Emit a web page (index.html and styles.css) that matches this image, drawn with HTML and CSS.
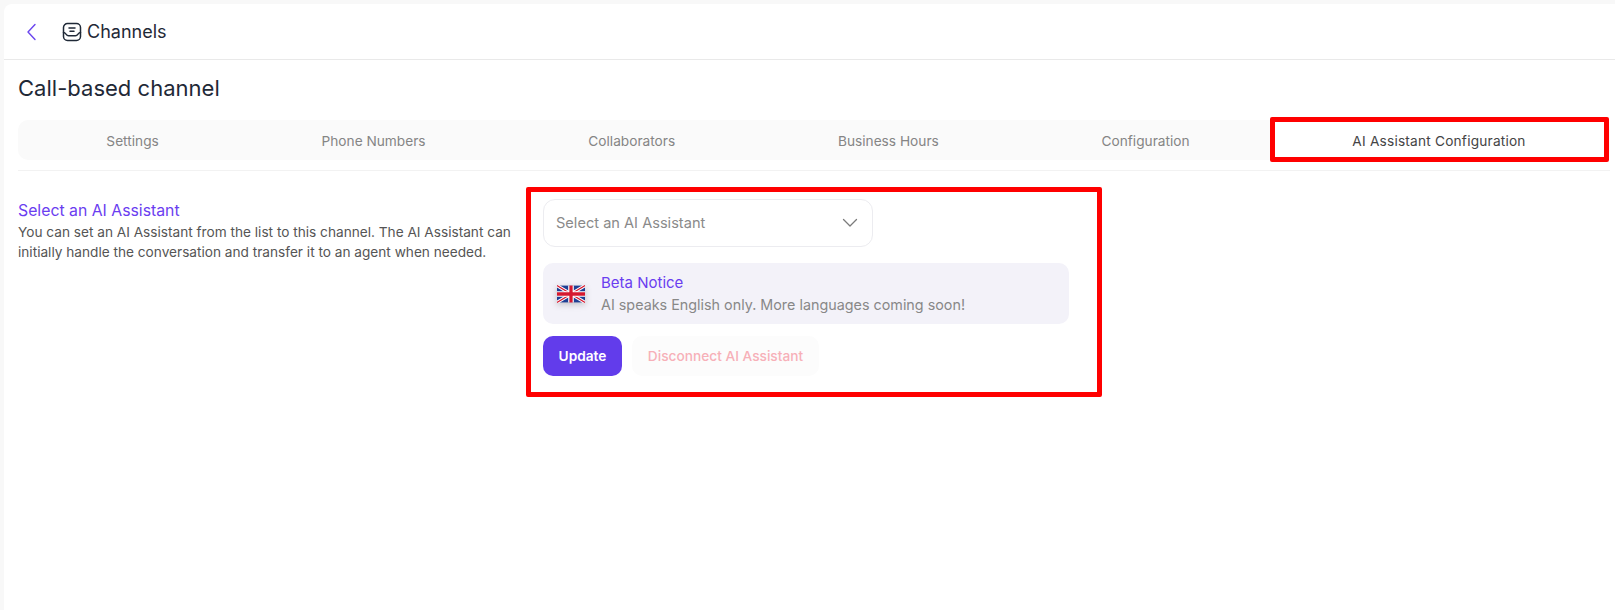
FILE: index.html
```html
<!DOCTYPE html>
<html>

<head>
    <title>Channels</title>
    <link rel="stylesheet" href="styles.css">
</head>

<body>
    <div class="panel">
        <div class="top-bar">
            <svg class="back-icon" width="24" height="24" viewBox="0 0 24 24" fill="none" stroke="#6a45ee" stroke-width="1.4" stroke-linecap="round" stroke-linejoin="round">
                <path d="M15 4.500L8 12l7 7.500"/>
            </svg>
            <svg class="channel-icon" width="20" height="20" viewBox="0 0 20 20" fill="none" stroke="#1f2937" stroke-width="1.5" stroke-linecap="round" stroke-linejoin="round">
                <path d="M5.500 1.500h9a4 4 0 0 1 4 4v9a4 4 0 0 1-4 4h-9a4 4 0 0 1-4-4v-9a4 4 0 0 1 4-4z"/>
                <path d="M1.500 10.500c2.500 0 2.500 3.200 5 3.200h7c2.500 0 2.500-3.200 5-3.200"/>
                <path d="M7 6h6M8 9.200h4"/>
            </svg>
            <span class="top-title">Channels</span>
        </div>

        <div class="content">
            <h1 class="page-title">Call-based channel</h1>

            <div class="tabs">
                <div class="tab">Settings</div>
                <div class="tab">Phone Numbers</div>
                <div class="tab">Collaborators</div>
                <div class="tab">Business Hours</div>
                <div class="tab">Configuration</div>
                <div class="tab tab-active">AI Assistant Configuration</div>
            </div>

            <div class="section">
                <div class="section-info">
                    <div class="section-title">Select an AI Assistant</div>
                    <p class="section-desc">You can set an AI Assistant from the list to this channel. The AI Assistant can initially handle the conversation and transfer it to an agent when needed.</p>
                </div>

                <div class="section-form">
                    <div class="select-box">
                        <span>Select an AI Assistant</span>
                        <svg width="18" height="18" viewBox="0 0 18 18" fill="none" stroke="#7b7b7b" stroke-width="1.3" stroke-linecap="round" stroke-linejoin="round">
                            <path d="M2.500 5.500L9 12l6.500-6.500"/>
                        </svg>
                    </div>

                    <div class="notice">
                        <svg class="flag" width="28" height="18" viewBox="0 0 60 36">
                            <rect width="60" height="36" fill="#1f3f94"/>
                            <path d="M0 0L60 36M60 0L0 36" stroke="#fff" stroke-width="7"/>
                            <path d="M0 0L60 36M60 0L0 36" stroke="#d5182f" stroke-width="2.500"/>
                            <path d="M30 0V36M0 18H60" stroke="#fff" stroke-width="12"/>
                            <path d="M30 0V36M0 18H60" stroke="#d5182f" stroke-width="7"/>
                        </svg>
                        <div>
                            <div class="notice-title">Beta Notice</div>
                            <div class="notice-text">AI speaks English only. More languages coming soon!</div>
                        </div>
                    </div>

                    <div class="actions">
                        <button class="btn-update">Update</button>
                        <button class="btn-disconnect">Disconnect AI Assistant</button>
                    </div>
                </div>
            </div>
        </div>
    </div>

    <!-- red marks drawn over the screenshot -->
    <div class="mark mark-tab"></div>
    <div class="mark mark-form"></div>
</body>

</html>
```

FILE: styles.css
```css
* {
    box-sizing: border-box;
}

html,
body {
    height: 100%;
    overflow: hidden;
}

body {
    font-family: "Inter", "Liberation Sans", sans-serif;
    background-color: #f8f8f8;
    margin: 0;
    padding: 4px 0 0 4px;
    position: relative;
    color: #1f2937;
}

.panel {
    background: #fff;
    height: 100%;
    border-radius: 8px 0 0 0;
}

.top-bar {
    height: 56px;
    border-bottom: 1px solid #e9e9e9;
    display: flex;
    align-items: center;
    padding-left: 16px;
}

.back-icon {
    margin-right: 18px;
}

.channel-icon {
    margin-right: 5px;
}

.top-title {
    font-size: 18px;
}

.content {
    padding: 0 5px 0 14px;
}

.page-title {
    font-size: 22px;
    font-weight: 400;
    line-height: 30px;
    letter-spacing: 0.02px;
    margin: 13px 0 17px;
}

.tabs {
    display: flex;
    background: #fafafa;
    border-radius: 10px;
    height: 40px;
    padding: 0 3px 0 7px;
}

.tab {
    flex: 1 1 auto;
    display: flex;
    align-items: center;
    justify-content: center;
    font-size: 13.700px;
    color: #858585;
    padding: 2px 20px 0;
}

.tab-active {
    background: #fff;
    color: #444;
    letter-spacing: 0.2px;
}

.section {
    border-top: 1px solid #f2f2f2;
    margin-top: 10px;
    display: flex;
    padding-top: 28px;
}

.section-info {
    width: 525px;
    padding-top: 1px;
}

.section-title {
    color: #6a3df0;
    font-size: 15.800px;
    line-height: 22px;
}

.section-desc {
    font-size: 13.650px;
    line-height: 20px;
    color: #555;
    margin: 0;
    width: 500px;
}

.section-form {
    width: 526px;
}

.select-box {
    width: 330px;
    height: 48px;
    border: 1px solid #ececf0;
    border-radius: 12px;
    display: flex;
    align-items: center;
    justify-content: space-between;
    padding: 0 13px 0 12px;
    font-size: 14.600px;
    color: #8a8a8a;
}

.notice {
    background: #f3f2f9;
    border-radius: 10px;
    height: 61px;
    margin-top: 16px;
    display: flex;
    align-items: center;
    padding-left: 14px;
}

.flag {
    margin-right: 16px;
    filter: drop-shadow(0 2px 3px rgba(0, 0, 0, 0.2));
}

.notice-title {
    color: #6a3df0;
    font-size: 15px;
    line-height: 22px;
}

.notice-text {
    color: #888;
    font-size: 14.350px;
    line-height: 22px;
}

.actions {
    display: flex;
    gap: 10px;
    margin-top: 12px;
}

.actions button {
    font-family: inherit;
    font-size: 13.700px;
    height: 40px;
    border: none;
    border-radius: 10px;
}

.btn-update {
    width: 79px;
    background: #623ceb;
    color: #fff;
    font-size: 14px;
    font-weight: 600;
}

.btn-disconnect {
    width: 187px;
    background: #fcfcfc;
    color: #f7b0b8;
    font-weight: 500;
}

.mark {
    position: absolute;
    border: 5px solid #ff0000;
    border-radius: 2px;
}

.mark-tab {
    left: 1270px;
    top: 117px;
    width: 339px;
    height: 45px;
}

.mark-form {
    left: 526px;
    top: 187px;
    width: 576px;
    height: 210px;
}
```
